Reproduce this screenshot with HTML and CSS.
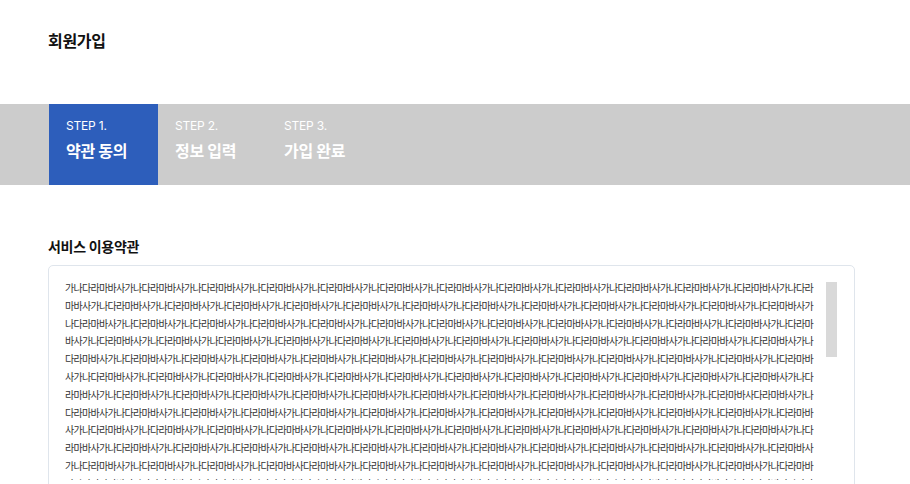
FILE: index.html
```html
<!DOCTYPE html>
<html lang="ko">
<head>
<meta charset="utf-8">
<title>회원가입</title>
<link rel="stylesheet" href="styles.css">
</head>
<body>
<div class="page">
  <header class="page-header">
    <h1 class="page-title">회원가입</h1>
  </header>
  <nav class="steps">
    <ol class="step-list">
      <li class="step is-active"><span class="step-num">STEP 1.</span><span class="step-name">약관 동의</span></li>
      <li class="step"><span class="step-num">STEP 2.</span><span class="step-name">정보 입력</span></li>
      <li class="step"><span class="step-num">STEP 3.</span><span class="step-name">가입 완료</span></li>
    </ol>
  </nav>
  <main class="content">
    <section class="terms">
      <h2 class="terms-title">서비스 이용약관</h2>
      <div class="terms-box">
        <div class="terms-scroll">
          <p class="terms-text">가나다라마바사가나다라마바사가나다라마바사가나다라마바사가나다라마바사가나다라마바사가나다라마바사가나다라마바사가나다라마바사가나다라마바사가나다라마바사가나다라<!--
-->마바사가나다라마바사가나다라마바사가나다라마바사가나다라마바사가나다라마바사가나다라마바사가나다라마바사가나다라마바사가나다라마바사가나다라마바사가나다라마바사가<!--
-->나다라마바사가나다라마바사가나다라마바사가나다라마바사가나다라마바사가나다라마바사가나다라마바사가나다라마바사가나다라마바사가나다라마바사가나다라마바사가나다라마<!--
-->바사가나다라마바사가나다라마바사가나다라마바사가나다라마바사가나다라마바사가나다라마바사가나다라마바사가나다라마바사가나다라마바사가나다라마바사가나다라마바사가나<!--
-->다라마바사가나다라마바사가나다라마바사가나다라마바사가나다라마바사가나다라마바사가나다라마바사가나다라마바사가나다라마바사가나다라마바사가나다라마바사가나다라마바<!--
-->사가나다라마바사가나다라마바사가나다라마바사가나다라마바사가나다라마바사가나다라마바사가나다라마바사가나다라마바사가나다라마바사가나다라마바사가나다라마바사가나다<!--
-->라마바사가나다라마바사가나다라마바사가나다라마바사가나다라마바사가나다라마바사가나다라마바사가나다라마바사가나다라마바사가나다라마바사가나다라마바사가나다라마바사<!--
-->가나다라마바사가나다라마바사가나다라마바사가나다라마바사가나다라마바사가나다라마바사다라마바사가나다라마바사가나다라마바사가나다라마바사가나다라마바사가나다라마바<!--
-->사가나다라마바사가나다라마바사가나다라마바사가나다라마바사가나다라마바사가나다라마바사가나다라마바사가나다라마바사가나다라마바사가나다라마바사가나다라마바사가나다<!--
-->라마바사가나다라마바사가나다라마바사가나다라마바사가나다라마바사가나다라마바사가나다라마바사가나다라마바사가나다라마바사가나다라마바사가나다라마바사가나다라마바사<!--
-->가나다라마바사가나다라마바사가나다라마바사가나다라마바사가나다라마바사가나다라마바사가나다라마바사가나다라마바사가나다라마바사가나다라마바사가나다라마바사가나다라<!--
-->마바사가나다라마바사가나다라마바사다라마바사가나다라마바사가나다라마바사가나다라마바사가나다라마바사가나다라마바사가나다라마바사가나다라마바사가나다라마바사가나다<!--
-->라마바사가나다라마바사가나다라마바사가나다라마바사가나다라마바사가나다라마바사가나다라마바사가나다라마바사가나다라마바사가나다라마바사가나다라마바사가나다라마바사<!--
-->가나다라마바사가나다라마바사가나다라마바사가나다라마바사가나다라마바사가나다라마바사가나다라마바사가나다라마바사가나다라마바사가나다라마바사가나다라마바사</p>
        </div>
        <div class="scrollbar" aria-hidden="true"><div class="scrollbar-thumb"></div></div>
      </div>
    </section>
  </main>
</div>
</body>
</html>
```

FILE: styles.css
```css
* {
  box-sizing: border-box;
}

body {
  margin: 0;
  background: #ffffff;
  color: #111111;
  font-family: Inter, "Noto Sans CJK KR", sans-serif;
}

.page-header {
  height: 104px;
  padding: 29px 48px 0;
}

.page-title {
  margin: 0;
  font-size: 16px;
  line-height: 24px;
  font-weight: 700;
  letter-spacing: -0.3px;
}

.steps {
  height: 81px;
  background: #cccccc;
}

.step-list {
  display: flex;
  height: 100%;
  margin: 0;
  padding: 0 0 0 49px;
  list-style: none;
}

.step {
  display: flex;
  flex-direction: column;
  gap: 6px;
  width: 109px;
  padding: 15px 17px 0;
  color: #ffffff;
}

.step.is-active {
  background: #2d5ebb;
}

.step-num {
  font-size: 12px;
  line-height: 14px;
  letter-spacing: -0.2px;
}

.step-name {
  font-size: 16px;
  line-height: 24px;
  font-weight: 700;
  letter-spacing: -0.3px;
}

.content {
  padding: 52px 55px 0 48px;
}

.terms-title {
  margin: 0 0 8px;
  font-size: 14px;
  line-height: 20px;
  font-weight: 700;
  letter-spacing: -0.3px;
}

.terms-box {
  display: flex;
  border: 1px solid #dfe5ec;
  border-radius: 5px;
  padding: 14px 17px 11px 16px;
}

.terms-scroll {
  flex: 1;
  height: 200px;
  overflow: hidden;
  padding-right: 10px;
}

.terms-text {
  margin: 0;
  font-size: 10px;
  line-height: 17.8px;
  letter-spacing: -0.7px;
  color: #333333;
  word-break: break-all;
}

.scrollbar {
  flex: 0 0 11px;
  width: 11px;
}

.scrollbar-thumb {
  height: 75px;
  margin-top: 2px;
  background: #d9d9d9;
}
```
